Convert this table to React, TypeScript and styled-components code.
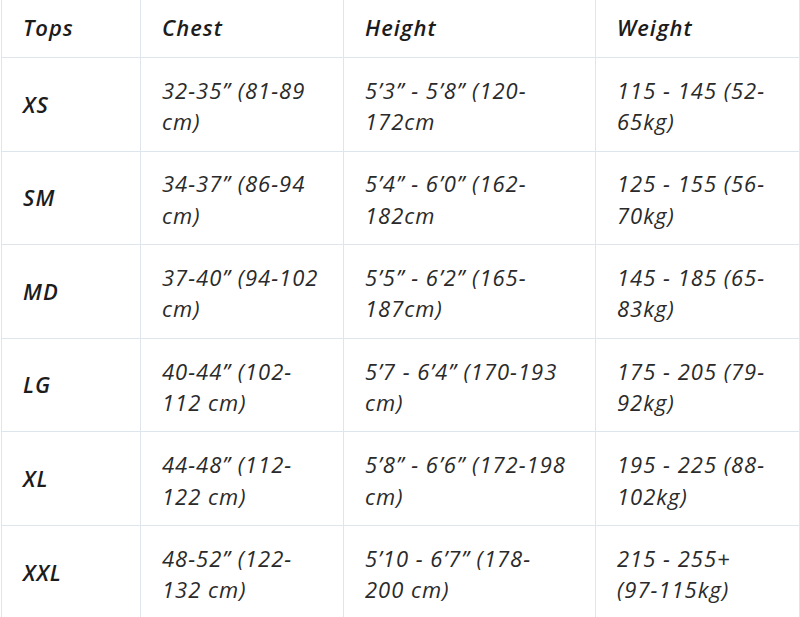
import styled, { createGlobalStyle } from "styled-components";

const GlobalStyle = createGlobalStyle`
    html, body {
        margin: 0;
        padding: 0;
        background: #ffffff;
    }
    body {
        font-family: "Open Sans", "Liberation Sans", sans-serif;
        overflow: hidden;
    }
`;

const LINE = '#dfe5ec';

const Wrap = styled.div`
    width: 800px;
    height: 617px;
    overflow: hidden;
`;
const Table = styled.table`
    border-collapse: collapse;
    table-layout: fixed;
    width: 798px;
    margin-left: 1px;
    color: #222;
`;
const Col = styled.col<{ $w: number }>`
    width: ${props => props.$w}px;
`;
const HeadCell = styled.th`
    height: 53px;
    padding: 0 21px 4px;
    text-align: left;
    vertical-align: middle;
    font-size: 22px;
    letter-spacing: 1px;
    font-style: italic;
    font-weight: 600;
    color: #1c1c1c;
    border: 1px solid ${LINE};
    border-top: none;
`;
const Cell = styled.td<{ $size?: boolean }>`
    height: ${props => props.$size ? 92.6 : 88.6}px;
    padding: ${props => props.$size ? '0 21px' : '4px 21px 0'};
    vertical-align: middle;
    font-size: 22px;
    line-height: 31.5px;
    letter-spacing: 1px;
    font-style: italic;
    font-weight: ${props => props.$size ? 600 : 400};
    color: ${props => props.$size ? '#1c1c1c' : '#2a2a2a'};
    border: 1px solid ${LINE};
    white-space: nowrap;
`;

interface ISizeRow {
    size: string;
    chest: string[];
    height: string[];
    weight: string[];
}

const rows: ISizeRow[] = [
    { size: 'XS', chest: ['32-35” (81-89', 'cm)'], height: ['5’3” - 5’8” (120-', '172cm'], weight: ['115 - 145 (52-', '65kg)'] },
    { size: 'SM', chest: ['34-37” (86-94', 'cm)'], height: ['5’4” - 6’0” (162-', '182cm'], weight: ['125 - 155 (56-', '70kg)'] },
    { size: 'MD', chest: ['37-40” (94-102', 'cm)'], height: ['5’5” - 6’2” (165-', '187cm)'], weight: ['145 - 185 (65-', '83kg)'] },
    { size: 'LG', chest: ['40-44” (102-', '112 cm)'], height: ['5’7 - 6’4” (170-193', 'cm)'], weight: ['175 - 205 (79-', '92kg)'] },
    { size: 'XL', chest: ['44-48” (112-', '122 cm)'], height: ['5’8” - 6’6” (172-198', 'cm)'], weight: ['195 - 225 (88-', '102kg)'] },
    { size: 'XXL', chest: ['48-52” (122-', '132 cm)'], height: ['5’10 - 6’7” (178-', '200 cm)'], weight: ['215 - 255+', '(97-115kg)'] },
];

function Lines({ lines }: { lines: string[] }) {
    return (<>
        {lines.map((line, i) => <div key={i}>{line}</div>)}
    </>);
}

function App() {
    return (<>
        <GlobalStyle />
        <Wrap>
            <Table>
                <colgroup>
                    <Col $w={139} />
                    <Col $w={203} />
                    <Col $w={252} />
                    <Col $w={204} />
                </colgroup>
                <thead>
                    <tr>
                        <HeadCell>Tops</HeadCell>
                        <HeadCell>Chest</HeadCell>
                        <HeadCell>Height</HeadCell>
                        <HeadCell>Weight</HeadCell>
                    </tr>
                </thead>
                <tbody>
                    {rows.map((row) =>
                    <tr key={row.size}>
                        <Cell $size>{row.size}</Cell>
                        <Cell><Lines lines={row.chest} /></Cell>
                        <Cell><Lines lines={row.height} /></Cell>
                        <Cell><Lines lines={row.weight} /></Cell>
                    </tr>)}
                </tbody>
            </Table>
        </Wrap>
    </>);
}

export default App;
